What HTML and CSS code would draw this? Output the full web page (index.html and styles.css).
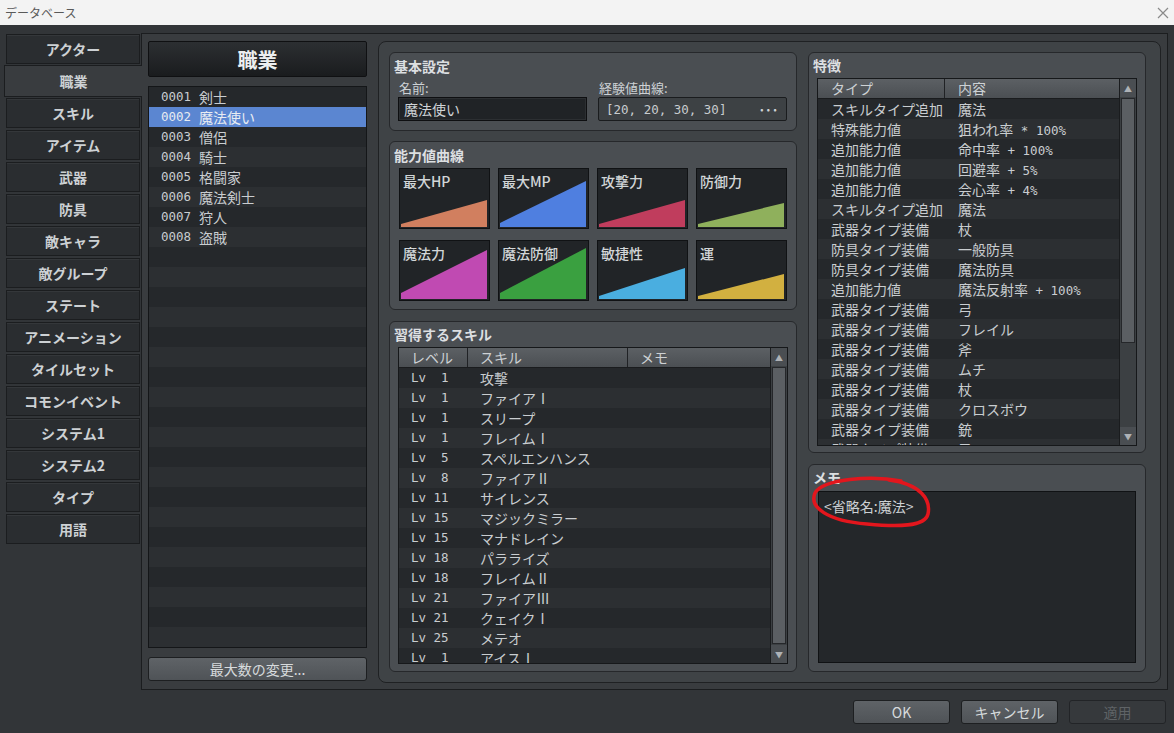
FILE: index.html
```html
<!DOCTYPE html>
<html lang="ja">
<head>
<meta charset="utf-8">
<title>データベース</title>
<link rel="stylesheet" href="styles.css">
</head>
<body>
<div class="titlebar">
  <span class="title">データベース</span>
  <svg class="close" width="12" height="12" viewBox="0 0 12 12"><path d="M1 1L11 11M11 1L1 11" stroke="#8a8a8a" stroke-width="1.2"/></svg>
</div>
<div class="main">
  <nav class="tabs">
    <div class="tab">アクター</div>
    <div class="tab active">職業</div>
    <div class="tab">スキル</div>
    <div class="tab">アイテム</div>
    <div class="tab">武器</div>
    <div class="tab">防具</div>
    <div class="tab">敵キャラ</div>
    <div class="tab">敵グループ</div>
    <div class="tab">ステート</div>
    <div class="tab">アニメーション</div>
    <div class="tab">タイルセット</div>
    <div class="tab">コモンイベント</div>
    <div class="tab">システム1</div>
    <div class="tab">システム2</div>
    <div class="tab">タイプ</div>
    <div class="tab">用語</div>
  </nav>
  <div class="panel">
    <div class="classcol">
      <div class="classhead">職業</div>
      <div class="list">
        <div class="row"><span class="id">0001</span><span>剣士</span></div>
        <div class="row sel"><span class="id">0002</span><span>魔法使い</span></div>
        <div class="row"><span class="id">0003</span><span>僧侶</span></div>
        <div class="row"><span class="id">0004</span><span>騎士</span></div>
        <div class="row"><span class="id">0005</span><span>格闘家</span></div>
        <div class="row"><span class="id">0006</span><span>魔法剣士</span></div>
        <div class="row"><span class="id">0007</span><span>狩人</span></div>
        <div class="row"><span class="id">0008</span><span>盗賊</span></div>
        <div class="row"></div><div class="row"></div><div class="row"></div><div class="row"></div>
        <div class="row"></div><div class="row"></div><div class="row"></div><div class="row"></div>
        <div class="row"></div><div class="row"></div><div class="row"></div><div class="row"></div>
        <div class="row"></div><div class="row"></div><div class="row"></div><div class="row"></div>
        <div class="row"></div><div class="row"></div><div class="row"></div><div class="row"></div>
      </div>
      <button class="btn wide">最大数の変更...</button>
    </div>
    <div class="editor">
      <div class="col-left">
        <section class="group basic">
          <div class="gtitle">基本設定</div>
          <div class="fields">
            <label class="flabel">名前:</label>
            <label class="flabel">経験値曲線:</label>
            <div class="input">魔法使い</div>
            <div class="curvefield"><span class="mono">[20, 20, 30, 30]</span><span class="dots">···</span></div>
          </div>
        </section>
        <section class="group curves">
          <div class="gtitle">能力値曲線</div>
          <div class="curvegrid">
            <div class="curve"><svg viewBox="0 0 89 59"><polygon points="1,55 87,31 87,58 1,58" fill="#d17f5f"/></svg><span class="clabel">最大HP</span></div>
            <div class="curve"><svg viewBox="0 0 89 59"><polygon points="1,54 87,12 87,58 1,58" fill="#4f7fe0"/></svg><span class="clabel">最大MP</span></div>
            <div class="curve"><svg viewBox="0 0 89 59"><polygon points="1,55 87,31 87,58 1,58" fill="#c03d5d"/></svg><span class="clabel">攻撃力</span></div>
            <div class="curve"><svg viewBox="0 0 89 59"><polygon points="1,55 87,34 87,58 1,58" fill="#8fb05c"/></svg><span class="clabel">防御力</span></div>
            <div class="curve"><svg viewBox="0 0 89 59"><polygon points="1,52 87,9 87,58 1,58" fill="#c04ab2"/></svg><span class="clabel">魔法力</span></div>
            <div class="curve"><svg viewBox="0 0 89 59"><polygon points="1,52 87,7 87,58 1,58" fill="#3aa040"/></svg><span class="clabel">魔法防御</span></div>
            <div class="curve"><svg viewBox="0 0 89 59"><polygon points="1,55 87,27 87,58 1,58" fill="#4aaee0"/></svg><span class="clabel">敏捷性</span></div>
            <div class="curve"><svg viewBox="0 0 89 59"><polygon points="1,55 87,33 87,58 1,58" fill="#d2b040"/></svg><span class="clabel">運</span></div>
          </div>
        </section>
        <section class="group skills">
          <div class="gtitle">習得するスキル</div>
          <div class="table skilltable">
            <div class="tmain">
              <div class="thead"><span>レベル</span><span>スキル</span><span>メモ</span></div>
              <div class="trow"><span class="mono">Lv  1</span><span>攻撃</span><span></span></div>
              <div class="trow"><span class="mono">Lv  1</span><span>ファイアⅠ</span><span></span></div>
              <div class="trow"><span class="mono">Lv  1</span><span>スリープ</span><span></span></div>
              <div class="trow"><span class="mono">Lv  1</span><span>フレイムⅠ</span><span></span></div>
              <div class="trow"><span class="mono">Lv  5</span><span>スペルエンハンス</span><span></span></div>
              <div class="trow"><span class="mono">Lv  8</span><span>ファイアⅡ</span><span></span></div>
              <div class="trow"><span class="mono">Lv 11</span><span>サイレンス</span><span></span></div>
              <div class="trow"><span class="mono">Lv 15</span><span>マジックミラー</span><span></span></div>
              <div class="trow"><span class="mono">Lv 15</span><span>マナドレイン</span><span></span></div>
              <div class="trow"><span class="mono">Lv 18</span><span>パラライズ</span><span></span></div>
              <div class="trow"><span class="mono">Lv 18</span><span>フレイムⅡ</span><span></span></div>
              <div class="trow"><span class="mono">Lv 21</span><span>ファイアⅢ</span><span></span></div>
              <div class="trow"><span class="mono">Lv 21</span><span>クェイクⅠ</span><span></span></div>
              <div class="trow"><span class="mono">Lv 25</span><span>メテオ</span><span></span></div>
              <div class="trow"><span class="mono">Lv  1</span><span>アイスⅠ</span><span></span></div>
            </div>
            <div class="vscroll">
              <div class="arrow">▲</div>
              <div class="thumb full"></div>
              <div class="arrow">▼</div>
            </div>
          </div>
        </section>
      </div>
      <div class="col-right">
        <section class="group traits">
          <div class="gtitle">特徴</div>
          <div class="table traittable">
            <div class="tmain">
              <div class="thead"><span>タイプ</span><span>内容</span></div>
              <div class="trow"><span>スキルタイプ追加</span><span>魔法</span></div>
              <div class="trow"><span>特殊能力値</span><span>狙われ率<span class="mono"> * 100%</span></span></div>
              <div class="trow"><span>追加能力値</span><span>命中率<span class="mono"> + 100%</span></span></div>
              <div class="trow"><span>追加能力値</span><span>回避率<span class="mono"> + 5%</span></span></div>
              <div class="trow"><span>追加能力値</span><span>会心率<span class="mono"> + 4%</span></span></div>
              <div class="trow"><span>スキルタイプ追加</span><span>魔法</span></div>
              <div class="trow"><span>武器タイプ装備</span><span>杖</span></div>
              <div class="trow"><span>防具タイプ装備</span><span>一般防具</span></div>
              <div class="trow"><span>防具タイプ装備</span><span>魔法防具</span></div>
              <div class="trow"><span>追加能力値</span><span>魔法反射率<span class="mono"> + 100%</span></span></div>
              <div class="trow"><span>武器タイプ装備</span><span>弓</span></div>
              <div class="trow"><span>武器タイプ装備</span><span>フレイル</span></div>
              <div class="trow"><span>武器タイプ装備</span><span>斧</span></div>
              <div class="trow"><span>武器タイプ装備</span><span>ムチ</span></div>
              <div class="trow"><span>武器タイプ装備</span><span>杖</span></div>
              <div class="trow"><span>武器タイプ装備</span><span>クロスボウ</span></div>
              <div class="trow"><span>武器タイプ装備</span><span>銃</span></div>
              <div class="trow"><span>武器タイプ装備</span><span>弓</span></div>
            </div>
            <div class="vscroll">
              <div class="arrow">▲</div>
              <div class="thumb part"></div>
              <div class="track"></div>
              <div class="arrow">▼</div>
            </div>
          </div>
        </section>
        <section class="group memo">
          <div class="gtitle">メモ</div>
          <div class="memobox">&lt;省略名:魔法&gt;</div>
          <svg class="scribble" width="130" height="70" viewBox="0 0 130 70"><path d="M92 16 C62 10 14 14 6 28 C0 42 18 56 58 59 C88 62 116 62 119 49 C122 35 112 19 80 15" fill="none" stroke="#e3161d" stroke-width="3.5" stroke-linecap="round"/></svg>
        </section>
      </div>
    </div>
  </div>
</div>
<div class="footer">
  <button class="btn">OK</button>
  <button class="btn">キャンセル</button>
  <button class="btn disabled">適用</button>
</div>
</body>
</html>
```

FILE: styles.css
```css
* { box-sizing: border-box; }
html, body { margin: 0; padding: 0; }
body {
  width: 1174px;
  height: 733px;
  overflow: hidden;
  background: #323538;
  font-family: "Noto Sans CJK JP", "Noto Sans", sans-serif;
  color: #c9cdd0;
  font-size: 14px;
}
.mono { font-family: "DejaVu Sans Mono", "Noto Sans CJK JP", monospace; font-size: 12px; white-space: pre; }

.titlebar {
  height: 25px;
  background: #f3f3f3;
  display: flex;
  align-items: center;
  justify-content: space-between;
  padding: 0 5px 0 5px;
}
.title { font-size: 12px; color: #5a5a5a; }

.main { display: flex; padding: 8px 6px 0 5px; height: 665px; }

.tabs { width: 136px; padding-top: 1px; display: flex; flex-direction: column; gap: 2px; }
.tab {
  height: 30px;
  width: 134px;
  margin-left: 1px;
  background: #2a2d30;
  border: 1px solid #1b1d1f;
  box-shadow: inset 0 1px 0 #34373a;
  display: flex;
  align-items: center;
  justify-content: center;
  font-weight: bold;
  font-size: 14px;
  color: #cdd1d4;
}
.tab.active {
  width: 138px;
  height: 32px;
  margin: -1px -1px -1px -1px;
  background: #393c3f;
  border-right: none;
  box-shadow: none;
  position: relative;
  z-index: 1;
}

.panel {
  flex: 1;
  height: 657px;
  background: #393c3f;
  border: 1px solid #1b1d1f;
  display: flex;
  gap: 11px;
  padding: 7px 6px 6px 6px;
}

.classcol { width: 219px; display: flex; flex-direction: column; }
.classhead {
  height: 36px;
  background: linear-gradient(#2c2f32, #1a1c1e);
  border: 1px solid #0f1012;
  border-radius: 2px;
  display: flex;
  align-items: center;
  justify-content: center;
  font-size: 20px;
  font-weight: bold;
  color: #eceef0;
}
.list {
  margin-top: 9px;
  height: 562px;
  border: 1px solid #141618;
  background: #25282b;
  overflow: hidden;
}
.row { height: 20px; display: flex; align-items: center; padding-left: 12px; line-height: 20px; }
.row:nth-child(odd) { background: #25282b; }
.row:nth-child(even) { background: #2c2f32; }
.row.sel { background: #5b86d1; color: #e8ecf2; }
.id { font-family: "DejaVu Sans Mono", monospace; font-size: 12.5px; width: 38px; }

.btn {
  height: 24px;
  width: 97px;
  background: linear-gradient(#5f6367, #4f5357);
  border: 1px solid #1d1f21;
  border-radius: 3px;
  color: #d6dadc;
  font-family: "Noto Sans CJK JP", sans-serif;
  font-size: 14px;
  padding: 0;
  line-height: 20px;
}
.btn.wide { margin-top: 9px; width: 219px; }
.btn.disabled { background: #36393c; color: #5f6366; border-color: #222427; }

.editor {
  flex: 1;
  border: 1px solid #1f2123;
  border-radius: 8px;
  background: #3f4346;
  padding: 10px;
  display: flex;
  gap: 11px;
}
.col-left { width: 408px; display: flex; flex-direction: column; }
.col-right { width: 338px; display: flex; flex-direction: column; }

.group {
  background: #4a4e52;
  border: 1px solid #26282b;
  border-radius: 6px;
  padding: 4px 8px 0 8px;
}
.gtitle { font-weight: bold; font-size: 14px; line-height: 18px; margin-left: -4px; color: #dcdfe1; }

.basic { height: 79px; }
.fields {
  display: grid;
  grid-template-columns: 189px 189px;
  column-gap: 11px;
  margin-top: 5px;
}
.flabel { font-size: 13px; line-height: 16px; padding-left: 1px; color: #cdd1d4; }
.input {
  margin-top: 1px;
  height: 24px;
  background: #202326;
  border: 1px solid #0e0f11;
  box-shadow: inset 0 0 0 1px #2c2f32;
  padding: 0 5px;
  line-height: 22px;
  color: #cfd3d6;
}
.curvefield {
  margin-top: 1px;
  height: 24px;
  background: #3d4144;
  border: 1px solid #1a1c1e;
  border-radius: 2px;
  padding: 0 8px 0 7px;
  display: flex;
  align-items: center;
  justify-content: space-between;
}
.curvefield .mono { font-size: 12.5px; }
.dots { font-size: 13px; font-weight: bold; color: #cfd3d6; letter-spacing: -1px; }

.curves { height: 169px; margin-top: 10px; }
.curvegrid {
  display: grid;
  grid-template-columns: repeat(4, 91px);
  grid-auto-rows: 61px;
  column-gap: 8px;
  row-gap: 11px;
  margin: 4px 0 0 1px;
}
.curve {
  position: relative;
  background: #212427;
  border: 1px solid #101214;
  padding: 2px 0 0 3px;
}
.curve svg { position: absolute; left: 0; top: 0; width: 89px; height: 59px; }
.clabel { position: relative; font-size: 14px; font-weight: 500; line-height: 20px; color: #d2d6d8; }

.skills { height: 351px; margin-top: 11px; padding-top: 3px; }
.table {
  display: flex;
  border: 1px solid #16181a;
  background: #25282b;
  margin-top: 4px;
}
.skilltable { height: 317px; }
.traittable { height: 368px; }
.tmain { flex: 1; display: flex; flex-direction: column; overflow: hidden; }
.thead {
  flex: none;
  height: 20px;
  display: grid;
  background: linear-gradient(#5c6064, #4b4f53);
  border-bottom: 1px solid #1a1c1e;
}
.thead span { padding-left: 12px; border-right: 1px solid #202225; line-height: 19px; font-size: 14px; color: #cdd1d4; }
.thead span:last-child { border-right: none; }
.trow { flex: none; height: 20px; display: grid; line-height: 20px; }
.trow span { padding-left: 12px; white-space: nowrap; overflow: hidden; }
.trow .mono { font-size: 12.5px; white-space: pre; }
.trow span .mono { padding-left: 0; }
.tmain .trow:nth-child(even) { background: #25282b; }
.tmain .trow:nth-child(odd) { background: #2c2f32; }
.skilltable .thead, .skilltable .trow { grid-template-columns: 69px 160px 1fr; }
.traittable .thead, .traittable .trow { grid-template-columns: 127px 1fr; }
.traittable .thead span, .traittable .trow span { padding-left: 13px; }
.traittable .trow span span { padding-left: 0; }

.vscroll {
  width: 17px;
  flex: none;
  background: #3c4043;
  border-left: 1px solid #1a1c1e;
  display: flex;
  flex-direction: column;
}
.arrow {
  height: 18px;
  flex: none;
  display: flex;
  align-items: center;
  justify-content: center;
  font-size: 8px;
  color: #aeb2b6;
  background: #4a4e52;
}
.thumb { margin: 1px 1px; background: #5b5f63; border: 1px solid #25272a; }
.thumb.full { flex: 1; }
.thumb.part { height: 245px; flex: none; }
.track { flex: 1; }

.traits { height: 401px; padding-top: 3px; }
.memo { height: 208px; margin-top: 11px; padding-top: 3px; position: relative; }
.memobox {
  margin: 5px 0 0 1px;
  width: 318px;
  height: 172px;
  background: #24272a;
  border: 1px solid #101214;
  padding: 4px 5px;
  line-height: 20px;
  color: #cdd1d4;
}
.scribble { position: absolute; left: 0; top: 0; }

.footer {
  display: flex;
  justify-content: flex-end;
  gap: 11px;
  padding: 10px 8px 0 0;
}
```
